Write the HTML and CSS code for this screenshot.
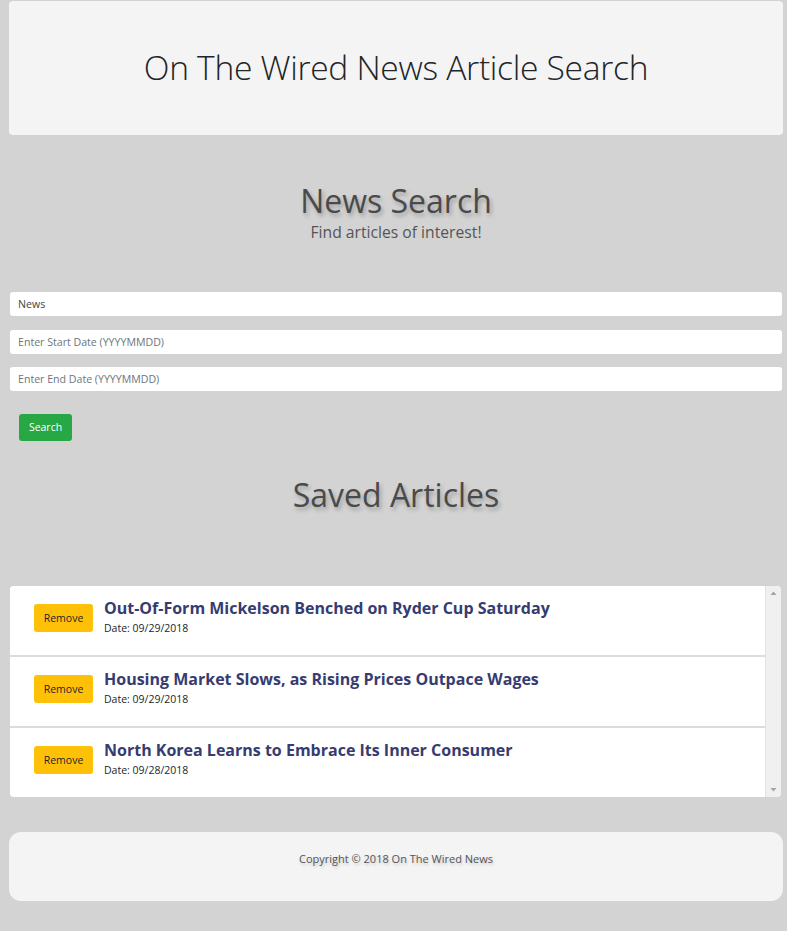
FILE: index.html
```html
<!DOCTYPE html>
<html lang="en">
<head>
<meta charset="utf-8">
<title>On The Wired News</title>
<link rel="stylesheet" href="styles.css">
</head>
<body>
<header class="jumbo">
  <h1 class="jumbo-title">On The Wired News Article Search</h1>
</header>

<section class="search">
  <h2 class="section-title">News Search</h2>
  <p class="section-sub">Find articles of interest!</p>
  <form class="search-form">
    <input class="field" type="text" value="News">
    <input class="field" type="text" placeholder="Enter Start Date (YYYYMMDD)">
    <input class="field" type="text" placeholder="Enter End Date (YYYYMMDD)">
    <div class="btn-row"><button type="button" class="btn btn-search">Search</button></div>
  </form>
</section>

<section class="saved">
  <h2 class="section-title">Saved Articles</h2>
  <div class="list-box">
    <ul class="article-list">
      <li class="article">
        <button type="button" class="btn btn-remove">Remove</button>
        <div class="article-info">
          <a class="article-title" href="#">Out-Of-Form Mickelson Benched on Ryder Cup Saturday</a>
          <div class="article-date">Date: 09/29/2018</div>
        </div>
      </li>
      <li class="article">
        <button type="button" class="btn btn-remove">Remove</button>
        <div class="article-info">
          <a class="article-title" href="#">Housing Market Slows, as Rising Prices Outpace Wages</a>
          <div class="article-date">Date: 09/29/2018</div>
        </div>
      </li>
      <li class="article">
        <button type="button" class="btn btn-remove">Remove</button>
        <div class="article-info">
          <a class="article-title" href="#">North Korea Learns to Embrace Its Inner Consumer</a>
          <div class="article-date">Date: 09/28/2018</div>
        </div>
      </li>
    </ul>
    <div class="scrollbar" aria-hidden="true">
      <svg class="sb-arrow" width="15" height="15" viewBox="0 0 15 15"><path d="M4.5 9 L7.5 5.5 L10.5 9 Z" fill="#a3a3a3"/></svg>
      <svg class="sb-arrow" width="15" height="15" viewBox="0 0 15 15"><path d="M4.5 6 L7.5 9.5 L10.5 6 Z" fill="#a3a3a3"/></svg>
    </div>
  </div>
</section>

<footer class="footer">
  <p class="footer-text">Copyright © 2018 On The Wired News</p>
</footer>
</body>
</html>
```

FILE: styles.css
```css
* { box-sizing: border-box; }

body {
  margin: 0;
  padding: 1px 4px 30px 9px;
  background: #d3d3d3;
  font-family: "Open Sans", "Noto Sans", sans-serif;
  color: #212529;
}

.jumbo {
  background: #f4f4f4;
  border-radius: 4px;
  height: 134px;
  display: flex;
  align-items: center;
  justify-content: center;
}

.jumbo-title {
  margin: 0 0 2px;
  font-size: 33.6px;
  font-weight: 300;
  color: #212529;
  letter-spacing: -0.3px;
}

.search {
  padding-top: 44px;
}

.section-title {
  margin: 0;
  text-align: center;
  font-size: 32px;
  font-weight: 400;
  line-height: 44px;
  color: #4a4a4a;
  text-shadow: 2px 3px 4px rgba(0,0,0,0.25);
}

.section-sub {
  margin: -1px 0 0;
  text-align: center;
  font-size: 15.7px;
  line-height: 20px;
  color: #555;
}

.search-form {
  margin-top: 50px;
  padding-right: 1px;
  display: flex;
  flex-direction: column;
  gap: 13.5px;
}

.field {
  display: block;
  width: calc(100% - 1px);
  margin-left: 1px;
  height: 24px;
  border: none;
  border-radius: 3px;
  background: #fff;
  padding: 0 8px;
  font-family: "Open Sans", "Noto Sans", sans-serif;
  font-size: 10.6px;
  color: #444;
}
.field::placeholder { color: #6c757d; }

.btn-row { padding: 9px 0 0 10px; }

.btn {
  border: none;
  border-radius: 3px;
  font-family: "Open Sans", "Noto Sans", sans-serif;
  font-size: 10.5px;
  cursor: pointer;
  padding: 0;
}

.btn-search {
  width: 53px;
  height: 27px;
  background: #28a745;
  color: #fff;
}

.saved { padding-top: 32px; }

.list-box {
  display: flex;
  margin: 69px 2px 0 1px;
  height: 211px;
  border-radius: 4px;
  overflow: hidden;
  background: #fff;
}

.article-list {
  list-style: none;
  flex: 1;
  margin: 0;
  padding: 0;
}

.article {
  display: flex;
  align-items: flex-start;
  gap: 11px;
  height: 71px;
  padding: 0 0 0 24px;
  background: #fff;
  border-bottom: 2px solid #dcdcdc;
}
.article:last-child { border-bottom: none; height: 69px; }

.btn-remove {
  width: 59px;
  height: 28px;
  background: #ffc107;
  color: #212529;
  margin-top: 18px;
}

.article-info {
  display: flex;
  flex-direction: column;
  padding-top: 11px;
}

.article-title {
  font-size: 16px;
  font-weight: 700;
  color: #363c70;
  text-decoration: none;
  line-height: 22px;
}

.article-date {
  margin-top: 2px;
  font-size: 10.5px;
  line-height: 14px;
  color: #212529;
}

.scrollbar {
  width: 16px;
  background: #f0f0f0;
  border-left: 1px solid #e2e2e2;
  display: flex;
  flex-direction: column;
  justify-content: space-between;
}

.sb-arrow { display: block; }

.footer {
  margin-top: 35px;
  background: #f4f4f4;
  border-radius: 12px;
  height: 69px;
  padding-top: 19px;
}

.footer-text {
  margin: 0;
  text-align: center;
  font-size: 11px;
  color: #555;
  text-shadow: 1px 2px 3px rgba(0,0,0,0.2);
}
```
